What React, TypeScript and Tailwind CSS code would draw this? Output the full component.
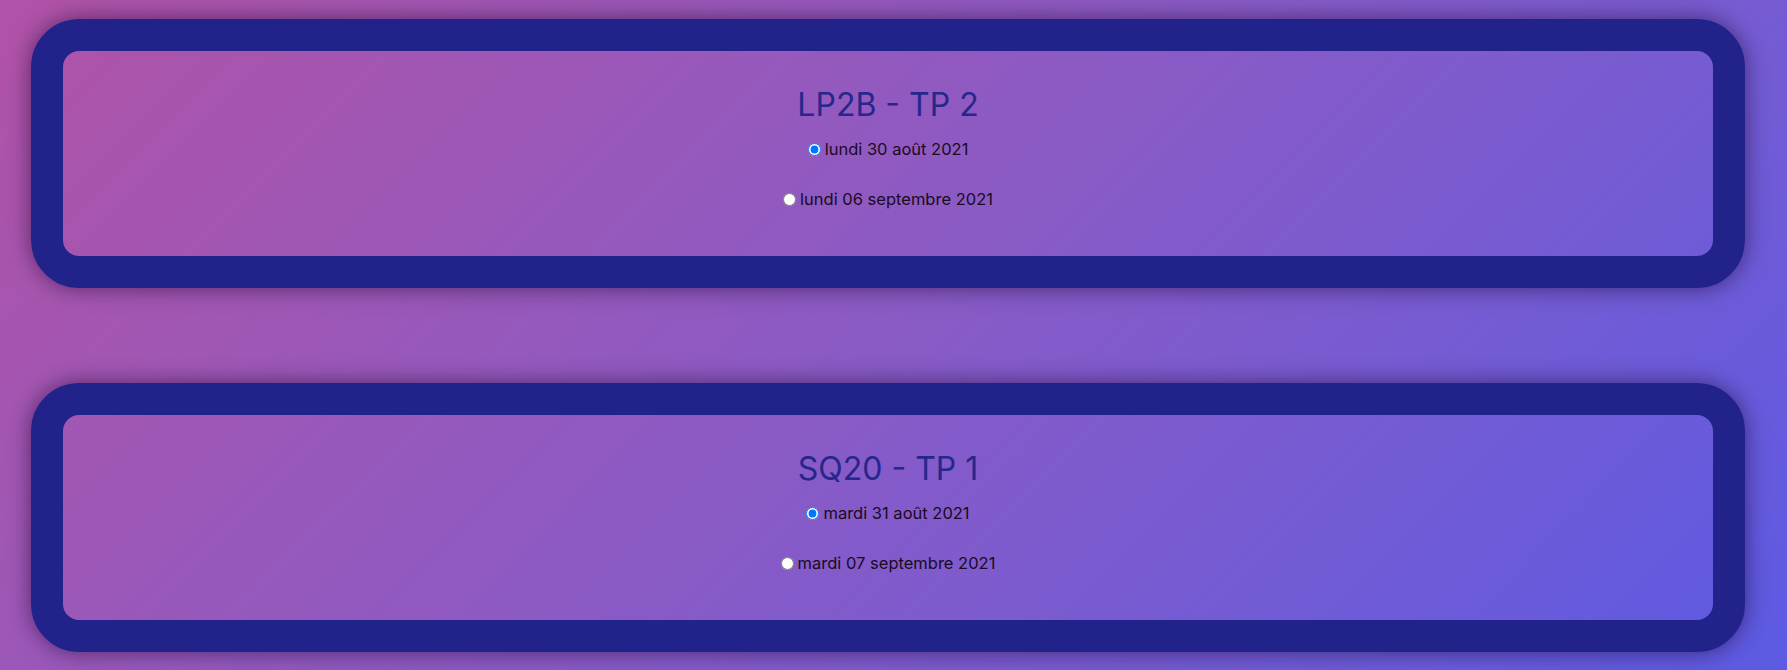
const sessions = [
  {
    id: "lp2b",
    title: "LP2B - TP 2",
    dates: ["lundi 30 août 2021", "lundi 06 septembre 2021"],
  },
  {
    id: "sq20",
    title: "SQ20 - TP 1",
    dates: ["mardi 31 août 2021", "mardi 07 septembre 2021"],
  },
];

function SessionCard({
  id,
  title,
  dates,
}: {
  id: string;
  title: string;
  dates: string[];
}) {
  return (
    <div className="rounded-[48px] border-[32px] border-[#22228b] shadow-[0_0_22px_rgba(20,0,40,0.55)]">
      <div className="flex flex-col items-center pt-[34px] pb-[47px]">
        <h2 className="text-[32px] leading-[40px] font-normal text-[#26268c]">
          {title}
        </h2>
        <div className="mt-[14px] flex flex-col items-center gap-[30px]">
          {dates.map((d, i) => (
            <label
              key={d}
              className="flex h-5 items-center gap-[4px] text-[16.5px] leading-5 text-[#1a0a22]"
            >
              <input
                type="radio"
                name={id}
                defaultChecked={i === 0}
                className="h-[13px] w-[13px]"
              />
              {d}
            </label>
          ))}
        </div>
      </div>
    </div>
  );
}

export default function App() {
  return (
    <div
      className="min-h-screen bg-linear-135 from-[#b152a7] to-[#5c5ae3] pt-[19px] pb-[18px]"
      style={{ fontFamily: "Inter, 'Noto Sans', sans-serif" }}
    >
      <div className="ml-[31px] mr-[42px] flex flex-col gap-[95px]">
        {sessions.map((s) => (
          <SessionCard key={s.id} {...s} />
        ))}
      </div>
    </div>
  );
}
